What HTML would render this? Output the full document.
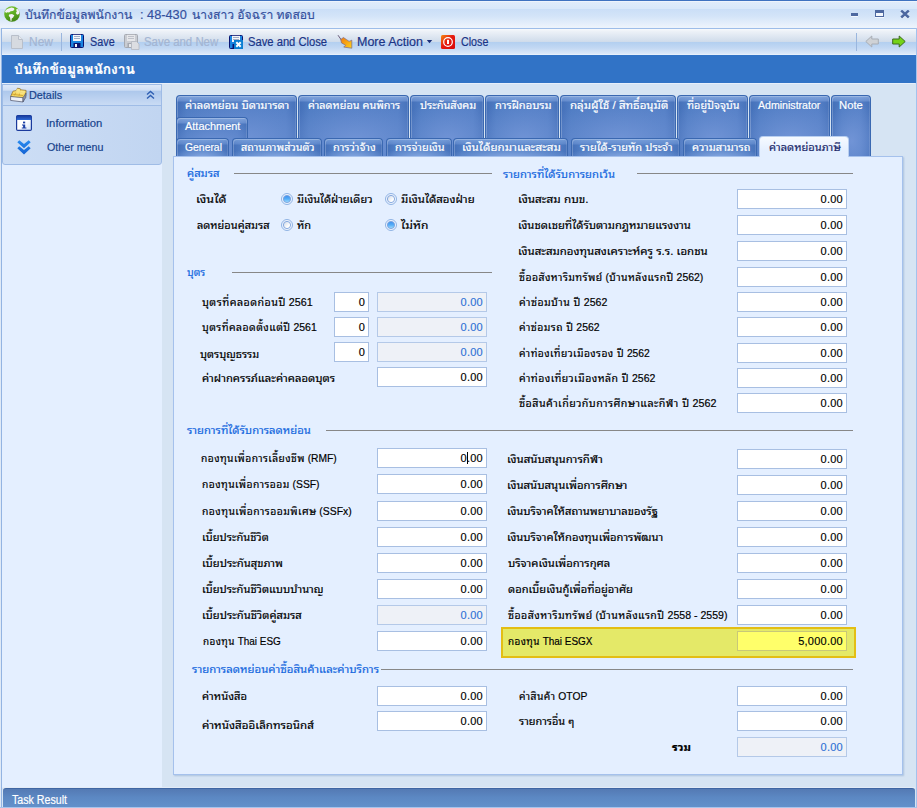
<!DOCTYPE html>
<html lang="th"><head><meta charset="utf-8"><title>บันทึกข้อมูลพนักงาน</title>
<style>
*{box-sizing:border-box;margin:0;padding:0}
html,body{width:917px;height:808px;overflow:hidden}
body{position:relative;background:#d6e4f3;font:11px 'Liberation Sans','Noto Sans Thai Looped','Loma','Noto Sans Thai UI','Noto Sans Thai',sans-serif;color:#000}
.a{position:absolute;white-space:nowrap}
.t{position:absolute;white-space:nowrap;line-height:14px;height:14px;transform-origin:0 50%;-webkit-text-stroke:0.18px currentColor}
.big{font-family:'Liberation Sans','Loma','Noto Sans Thai Looped','Noto Sans Thai UI','Noto Sans Thai',sans-serif}
.th{letter-spacing:.45px}
.tb{font-size:12px;color:#1a3486}
.dis{color:#a3b5d3}
.in{position:absolute;height:20px;background:#fff;border:1px solid #a8bfe2;text-align:right;font-size:11px;line-height:18px;padding-right:3px;white-space:nowrap;color:#000;letter-spacing:.25px;-webkit-text-stroke:0.15px currentColor}
.in.d{background:#eef1f7;color:#2f72d6;border-color:#b4c9e8}
.in.y{background:#ffff6a;border-color:#c8c878}
.sec{color:#1467de}
.ln{position:absolute;height:1px;background:#878787}
.tab{position:absolute;border:1px solid #3a68b1;border-bottom:none;border-radius:4px 4px 0 0;box-shadow:inset 1px 1px 0 rgba(255,255,255,.22),inset -1px 0 0 rgba(255,255,255,.12);background:linear-gradient(rgba(160,190,235,.6),rgba(135,168,225,.45) 5px,rgba(130,165,225,0) 6px),radial-gradient(ellipse 75% 70% at 52% 75%,#7194d6,rgba(113,148,214,0) 100%),linear-gradient(90deg,#4470b9,#4f7cc3 10px,#547fc6 calc(100% - 10px),#4873bb)}
.tab.r3{background:linear-gradient(rgba(150,185,235,.55),rgba(130,165,225,.35) 5px,rgba(130,165,225,0) 6px),radial-gradient(ellipse 60% 60% at 50% 110%,#86a8e0,rgba(134,168,224,0) 100%),linear-gradient(90deg,#4470b9,#4f7cc3 8px,#5682c8 50%,#4f7cc3 calc(100% - 8px),#4873bb)}
.tt{color:#fff}
.rad{position:absolute;width:12px;height:12px;border-radius:50%;border:1px solid #8db2e3;background:#eaf1fc}
.rad:before{content:"";position:absolute;left:1px;top:1px;width:8px;height:8px;border-radius:50%;border:1px solid #7fa6de;background:linear-gradient(135deg,#d4dce8,#ffffff 70%)}
.rad.on:before{background:linear-gradient(#2f86ea,#4aa6f6 55%,#8ad0fc)}
</style></head>
<body>
<div class="a" style="left:0;top:0;width:917px;height:28px;background:linear-gradient(#e2edfb 0,#d9e8fa 8.5px,#cbdff7 9.5px,#d3e4f8 16px,#ecf3fc 27px)"></div>
<div class="a" style="left:0;top:0;width:917px;height:1px;background:#3f72c0"></div>
<div class="a" style="left:0;top:1px;width:917px;height:1px;background:#eef4fc"></div>
<svg class="a" style="left:4px;top:6px" width="16" height="16" viewBox="0 0 16 16"><defs><linearGradient id="gl" x1="0" y1="0" x2="0.3" y2="1"><stop offset="0" stop-color="#7cc63a"/><stop offset="0.55" stop-color="#5fae22"/><stop offset="1" stop-color="#468a18"/></linearGradient></defs><circle cx="8" cy="8" r="7.8" fill="url(#gl)"/><path d="M0.9 5.6C1.8 3.6 3.8 2.3 6 2l1.6-.5 2.5.7.2 1.8-1.7.9-2 .4-1.5 1.1-2-.1-1 .8zM12 3.4l1.8-.5 1.6 2.6-.3 2.6-2 .6-1.3-1.7 1-1.5zM5 8.5l3-.5 2.3 1.2-1.2 2.3-1.4 1-.2 2.5-1-.2-.4-3.3-1.3-1.5z" fill="#f4f1f6"/></svg>
<div class="t big" style="left:24.6px;top:7.0px;transform:scaleX(0.9742);font-size:12.5px;color:#34509e;line-height:16px;height:16px">บันทึกข้อมูลพนักงาน</div>
<div class="t big" style="left:139.6px;top:7.0px;transform:scaleX(1.0196);font-size:12.5px;color:#34509e;line-height:16px;height:16px">: 48-430</div>
<div class="t big" style="left:192.3px;top:7.0px;transform:scaleX(0.9686);font-size:12.5px;color:#34509e;line-height:16px;height:16px">นางสาว อัจฉรา ทดสอบ</div>
<div class="a" style="left:851px;top:13px;width:7px;height:3px;background:#4d68a0;box-shadow:0 1px 0 #f2f7fd"></div>
<div class="a" style="left:875px;top:10px;width:9px;height:7px;border:1px solid #4d68a0;border-top-width:3px;background:#f4f8fd;box-shadow:0 1px 0 #f2f7fd"></div>
<svg class="a" style="left:900px;top:10px" width="10" height="9" viewBox="0 0 10 9"><path d="M1.2 1.5l7.6 7M8.8 1.5l-7.6 7" stroke="#f2f7fd" stroke-width="2.4"/><path d="M1.2 0.5l7.6 7M8.8 0.5l-7.6 7" stroke="#4d68a0" stroke-width="2.4"/></svg>
<div class="a" style="left:1px;top:28px;width:915px;height:27px;border:1px solid #9dbde9;border-bottom:none;border-right:none;background:linear-gradient(#f8fafc 0,#eef2f8 2px,#d0dceb 12.6px,#b3cff0 13.4px,#c2d8f3 19px,#dde9f9 25px,#f2f7fd 26px)"></div>
<svg class="a" style="left:10px;top:34px" width="14" height="16" viewBox="0 0 14 16"><path d="M1.5 1.5h7l4 4v9h-11z" fill="#d6dae0" stroke="#b8bfca"/><path d="M8.5 1.5v4h4" fill="#e6e9ee" stroke="#b8bfca"/></svg>
<div class="t tb dis" style="left:29.0px;top:35.0px;transform:scaleX(0.9954);">New</div>
<div class="a" style="left:61px;top:33px;width:1px;height:18px;background:#9ab6de"></div>
<svg class="a" style="left:70px;top:34px" width="16" height="16" viewBox="0 0 16 16"><rect x="0.5" y="0.5" width="13" height="13" rx="1" fill="#1b84e0" stroke="#0a1470"/><rect x="3" y="0.8" width="8" height="6.2" fill="#f4f5f8"/><path d="M4 2.5h6M4 4.5h6" stroke="#8a9ab8" stroke-width=".8"/><rect x="3.5" y="9" width="7" height="4.5" fill="#0a1470"/><rect x="5" y="10" width="2" height="3" fill="#f4f5f8"/></svg>
<div class="t tb" style="left:89.7px;top:35.0px;transform:scaleX(0.9014);">Save</div>
<svg class="a" style="left:124px;top:34px" width="16" height="16" viewBox="0 0 16 16"><rect x="0.5" y="0.5" width="13" height="13" rx="1" fill="#c9ccd2" stroke="#a4a8b0"/><rect x="3" y="0.8" width="8" height="6.2" fill="#e6e7ea"/><path d="M4 2.5h6M4 4.5h6" stroke="#b4b8c0" stroke-width=".8"/><rect x="3.5" y="9" width="7" height="4.5" fill="#a4a8b0"/><rect x="5" y="10" width="2" height="3" fill="#e6e7ea"/><path d="M7.5 7.5h5l2.5 2.5v5.5h-7.5z" fill="#dcdee2" stroke="#b4b8c0" stroke-width=".8"/></svg>
<div class="t tb dis" style="left:143.6px;top:35.0px;transform:scaleX(0.9507);">Save and New</div>
<svg class="a" style="left:229px;top:35px" width="16" height="16" viewBox="0 0 16 16"><rect x="0.5" y="0.5" width="13" height="13" rx="1" fill="#1b84e0" stroke="#0a1470"/><rect x="3" y="0.8" width="8" height="6.2" fill="#f4f5f8"/><path d="M4 2.5h6M4 4.5h6" stroke="#8a9ab8" stroke-width=".8"/><rect x="3.5" y="9" width="7" height="4.5" fill="#0a1470"/><rect x="5" y="10" width="2" height="3" fill="#f4f5f8"/><rect x="5" y="5" width="9" height="9" fill="#0b7fd2"/><path d="M7.3 7.3l4.4 4.4M11.7 7.3l-4.4 4.4" stroke="#fff" stroke-width="2"/></svg>
<div class="t tb" style="left:247.8px;top:35.0px;transform:scaleX(0.9336);">Save and Close</div>
<svg class="a" style="left:337px;top:34px" width="16" height="16" viewBox="0 0 16 16"><defs><linearGradient id="og" x1="0" y1="0" x2="1" y2="1"><stop offset="0" stop-color="#f07a10"/><stop offset="1" stop-color="#ffd21a"/></linearGradient></defs><path d="M1 1.2l3.5 5" stroke="#6a5a7a" stroke-width="1"/><path d="M3.7 5.5l2.7-2 3 2 2.7 1.9 2.7-1.2v8l-8.1-1.1 1.9-1.9-4.1-2.3z" fill="url(#og)" stroke="#7a6a8a" stroke-width=".7"/></svg>
<div class="t tb" style="left:356.7px;top:35.0px;transform:scaleX(1.0392);">More Action</div>
<svg class="a" style="left:426px;top:39px" width="7" height="5" viewBox="0 0 7 5"><path d="M0.8 1h5.4l-2.7 3.2z" fill="#1b2f7a"/></svg>
<svg class="a" style="left:441px;top:35px" width="14" height="14" viewBox="0 0 14 14"><defs><linearGradient id="rg" x1="0" y1="0" x2="1" y2="1"><stop offset="0" stop-color="#f58a10"/><stop offset=".45" stop-color="#e61b10"/><stop offset="1" stop-color="#d80808"/></linearGradient></defs><rect x="0" y="0" width="14" height="14" rx="1.5" fill="url(#rg)"/><circle cx="7" cy="7" r="4.3" fill="none" stroke="#fff" stroke-width="1.2"/><rect x="6" y="4.8" width="2" height="4.2" fill="#fff"/></svg>
<div class="t tb" style="left:461.3px;top:35.0px;transform:scaleX(0.8913);">Close</div>
<div class="a" style="left:856px;top:33px;width:1px;height:18px;background:#9ab6de"></div>
<svg class="a" style="left:865px;top:35px" width="14" height="13" viewBox="0 0 14 13"><path d="M0.8 6.5l6-5.5v3h6.5v5h-6.5v3z" fill="#cfd2d6" stroke="#a8adb5"/></svg>
<svg class="a" style="left:892px;top:35px" width="14" height="13" viewBox="0 0 14 13"><path d="M13.2 6.5l-6-5.5v3h-6.5v5h6.5v3z" fill="#74d318" stroke="#3c6a20"/></svg>
<div class="a" style="left:2px;top:55px;width:914px;height:28px;background:#3173c6"></div>
<div class="t big" style="left:14.3px;top:59.5px;transform:scaleX(0.9784);font-size:14px;font-weight:bold;color:#fff;line-height:18px;height:18px">บันทึกข้อมูลพนักงาน</div>
<div class="a" style="left:0;top:28px;width:1px;height:780px;background:#dfe9f6"></div>
<div class="a" style="left:1px;top:28px;width:1px;height:780px;background:#93b4e2"></div>
<div class="a" style="left:916px;top:28px;width:1px;height:780px;background:#a3c2ec"></div>
<div class="a" style="left:2px;top:83px;width:913px;height:1px;background:#e6effb"></div>
<div class="a" style="left:2px;top:84px;width:160px;height:703px;background:#e4efff"></div>
<div class="a" style="left:2px;top:84px;width:160px;height:81px;background:linear-gradient(90deg,#cddef5,#c1d5f1);border:1px solid #9fbce6;border-radius:0 0 3px 3px"></div>
<div class="a" style="left:2px;top:84px;width:160px;height:22px;background:linear-gradient(#dee9f9 0,#d0dff5 5px,#aec8ec 6.5px,#c9dbf4 20px);border:1px solid #9fbce6"></div>
<svg class="a" style="left:10px;top:87px" width="17" height="16" viewBox="0 0 17 16"><path d="M0.6 9.5l2.4-5.3 3.3-.6 1.2-2.4 2.8.6.4 1 5.4.6-.3 5.2-2.6 4z" fill="#f6d75e" stroke="#8a6a28" stroke-width=".7"/><path d="M3.4 4.6l10 1.2M6.4 4l-1.8 4.3M10.6 3l-1.6 5.6M2 7.2l11 1.4" stroke="#c79a2a" stroke-width=".7" fill="none"/><path d="M2.6 5l3.2-.8 1.2-2.4 2.6.5.3 1.2 5.6.6-2.3 3.4z" fill="#fbe88c" opacity=".8"/><path d="M0.6 9.5l12.4 1.2v4.3l-12.4-1.6z" fill="#eef1f7" stroke="#4a5068" stroke-width=".7"/><path d="M13 10.7l2.9-4.6v4.2l-2.9 4.7z" fill="#8e94a8" stroke="#4a5068" stroke-width=".6"/></svg>
<div class="t " style="left:28.7px;top:88.0px;transform:scaleX(0.9845);color:#15428b">Details</div>
<svg class="a" style="left:146px;top:90px" width="9" height="10" viewBox="0 0 9 10"><path d="M1 4.5l3.5-3 3.5 3M1 8.5l3.5-3 3.5 3" fill="none" stroke="#2f5fb3" stroke-width="1.4"/></svg>
<svg class="a" style="left:16px;top:115px" width="16" height="16" viewBox="0 0 16 16"><defs><linearGradient id="ih" x1="0" y1="0" x2="0" y2="1"><stop offset="0" stop-color="#173a9c"/><stop offset="1" stop-color="#2f6ad6"/></linearGradient><linearGradient id="ib" x1="0" y1="0" x2="1" y2="1"><stop offset="0.5" stop-color="#ffffff"/><stop offset="1" stop-color="#cfe0f8"/></linearGradient></defs><rect x="0.6" y="0.6" width="14.8" height="14.8" rx="1.2" fill="url(#ib)" stroke="#1b3a9c" stroke-width="1.2"/><path d="M0.6 1.6q0-1 1-1h12.8q1 0 1 1v3.4h-14.8z" fill="url(#ih)"/><rect x="7" y="6.6" width="2.2" height="1.8" fill="#1b3fa6"/><path d="M6 9.4h3.2v3.2h1.2v1h-4.6v-1h1.3v-2.2h-1.1z" fill="#1b3fa6"/></svg>
<div class="t " style="left:46.0px;top:116.0px;transform:scaleX(1.0222);color:#15428b">Information</div>
<svg class="a" style="left:17px;top:140px" width="14" height="15" viewBox="0 0 14 15"><defs><linearGradient id="cv" x1="0" y1="0" x2="0" y2="1"><stop offset="0" stop-color="#2a8cf0"/><stop offset="1" stop-color="#1462d2"/></linearGradient></defs><path d="M0.3 2.2l2-1.9 4.7 3.6 4.7-3.6 2 1.9-6.7 6zM0.3 8.2l2-1.9 4.7 3.6 4.7-3.6 2 1.9-6.7 6.4z" fill="url(#cv)"/></svg>
<div class="t " style="left:46.8px;top:140.0px;transform:scaleX(0.9716);color:#15428b">Other menu</div>
<div class="a" style="left:2px;top:787px;width:913px;height:1px;background:#e2ebf7"></div>
<div class="a" style="left:3px;top:788px;width:912px;height:20px;background:linear-gradient(#547ab4,#5c88c3 45%,#6391cb);border-top:1px solid #3f66a3;border-radius:3px 3px 0 0"></div>
<div class="a" style="left:0;top:807px;width:917px;height:1px;background:#a6c4ec"></div>
<div class="t " style="left:11.9px;top:793.3px;transform:scaleX(0.8874);font-size:12px;color:#fff">Task Result</div>
<div class="tab" style="left:176.0px;top:95.0px;width:121.0px;height:61.0px"></div>
<div class="t tt" style="left:185.1px;top:98.3px;transform:scaleX(1.0226);">ค่าลดหย่อน บิดามารดา</div>
<div class="tab" style="left:298.0px;top:95.0px;width:111.0px;height:61.0px"></div>
<div class="t tt" style="left:308.0px;top:98.3px;transform:scaleX(0.9880);">ค่าลดหย่อน คนพิการ</div>
<div class="tab" style="left:410.0px;top:95.0px;width:74.0px;height:61.0px"></div>
<div class="t tt" style="left:419.5px;top:98.3px;transform:scaleX(0.9984);">ประกันสังคม</div>
<div class="tab" style="left:485.0px;top:95.0px;width:74.0px;height:61.0px"></div>
<div class="t tt" style="left:494.9px;top:98.3px;transform:scaleX(1.0115);">การฝึกอบรม</div>
<div class="tab" style="left:560.0px;top:95.0px;width:116.0px;height:61.0px"></div>
<div class="t tt" style="left:569.6px;top:98.3px;transform:scaleX(1.0503);">กลุ่มผู้ใช้ / สิทธิ์อนุมัติ</div>
<div class="tab" style="left:677.0px;top:95.0px;width:71.0px;height:61.0px"></div>
<div class="t tt" style="left:687.1px;top:98.3px;transform:scaleX(0.9851);">ที่อยู่ปัจจุบัน</div>
<div class="tab" style="left:749.0px;top:95.0px;width:81.0px;height:61.0px"></div>
<div class="t tt" style="left:758.2px;top:98.3px;transform:scaleX(0.9624);">Administrator</div>
<div class="tab" style="left:831.0px;top:95.0px;width:40.0px;height:61.0px"></div>
<div class="t tt" style="left:838.7px;top:98.3px;transform:scaleX(1.0248);">Note</div>
<div class="tab" style="left:176.0px;top:117.0px;width:72.0px;height:39.0px"></div>
<div class="t tt" style="left:185.2px;top:118.8px;transform:scaleX(0.9955);">Attachment</div>
<div class="tab r3" style="left:176.0px;top:138.0px;width:53.0px;height:18.0px"></div>
<div class="t tt" style="left:184.7px;top:140.2px;transform:scaleX(0.9439);">General</div>
<div class="tab r3" style="left:231.5px;top:138.0px;width:90.5px;height:18.0px"></div>
<div class="t tt" style="left:240.9px;top:140.2px;transform:scaleX(0.9921);">สถานภาพส่วนตัว</div>
<div class="tab r3" style="left:324.0px;top:138.0px;width:59.0px;height:18.0px"></div>
<div class="t tt" style="left:333.0px;top:140.2px;transform:scaleX(1.0063);">การว่าจ้าง</div>
<div class="tab r3" style="left:385.5px;top:138.0px;width:66.0px;height:18.0px"></div>
<div class="t tt" style="left:394.5px;top:140.2px;transform:scaleX(1.0011);">การจ่ายเงิน</div>
<div class="tab r3" style="left:453.0px;top:138.0px;width:115.0px;height:18.0px"></div>
<div class="t tt" style="left:462.0px;top:140.2px;transform:scaleX(1.0551);">เงินได้ยกมาและสะสม</div>
<div class="tab r3" style="left:570.5px;top:138.0px;width:109.5px;height:18.0px"></div>
<div class="t tt" style="left:579.8px;top:140.2px;transform:scaleX(1.0066);">รายได้-รายหัก ประจำ</div>
<div class="tab r3" style="left:683.0px;top:138.0px;width:74.0px;height:18.0px"></div>
<div class="t tt" style="left:691.5px;top:140.2px;transform:scaleX(1.0067);">ความสามารถ</div>
<div class="a" style="left:173px;top:156px;width:730px;height:619px;background:#e4efff;border:1px solid #a5c1ec;box-shadow:1px 1px 1.5px rgba(110,145,195,.4)"></div>
<div class="a" style="left:759px;top:136px;width:90px;height:21px;background:linear-gradient(#f6faff,#e4efff 70%);border:1px solid #b9cff0;border-bottom:none;border-radius:4px 4px 0 0"></div>
<div class="t " style="left:768.6px;top:139.5px;transform:scaleX(1.0121);color:#1b2a6b">ค่าลดหย่อนภาษี</div>
<svg class="a" width="0" height="0"><defs><linearGradient id="ron" x1="0" y1="0" x2="0" y2="1"><stop offset="0" stop-color="#3a8eee"/><stop offset=".5" stop-color="#55aef8"/><stop offset="1" stop-color="#a6e0fe"/></linearGradient><linearGradient id="roff" x1="0" y1="0" x2="1" y2="1"><stop offset="0" stop-color="#cdd6e4"/><stop offset=".7" stop-color="#ffffff"/></linearGradient></defs></svg>
<div class="t sec" style="left:187.0px;top:166.0px;transform:scaleX(1.0229);">คู่สมรส</div>
<div class="ln" style="left:234.0px;top:173px;width:258.0px"></div>
<div class="t sec" style="left:503.1px;top:167.0px;transform:scaleX(1.0266);">รายการที่ได้รับการยกเว้น</div>
<div class="ln" style="left:637.2px;top:173px;width:216.1px"></div>
<div class="t " style="left:196.1px;top:192.0px;transform:scaleX(1.1363);">เงินได้</div>
<svg class="a" style="left:281px;top:193px" width="12" height="12" viewBox="0 0 12 12"><circle cx="6" cy="6" r="5.5" fill="#edf3fd" stroke="#8fb3e4"/><circle cx="6" cy="6" r="3.6" fill="url(#ron)" stroke="#7aa2dc" stroke-width=".9"/></svg>
<div class="t " style="left:296.8px;top:192.0px;transform:scaleX(1.0045);">มีเงินได้ฝ่ายเดียว</div>
<svg class="a" style="left:385px;top:193px" width="12" height="12" viewBox="0 0 12 12"><circle cx="6" cy="6" r="5.5" fill="#edf3fd" stroke="#8fb3e4"/><circle cx="6" cy="6" r="3.6" fill="url(#roff)" stroke="#7aa2dc" stroke-width=".9"/></svg>
<div class="t " style="left:400.6px;top:192.0px;transform:scaleX(1.0403);">มีเงินได้สองฝ่าย</div>
<div class="t " style="left:197.1px;top:218.0px;transform:scaleX(1.0001);">ลดหย่อนคู่สมรส</div>
<svg class="a" style="left:281px;top:219px" width="12" height="12" viewBox="0 0 12 12"><circle cx="6" cy="6" r="5.5" fill="#edf3fd" stroke="#8fb3e4"/><circle cx="6" cy="6" r="3.6" fill="url(#roff)" stroke="#7aa2dc" stroke-width=".9"/></svg>
<div class="t " style="left:296.9px;top:218.0px;transform:scaleX(1.0070);">หัก</div>
<svg class="a" style="left:385px;top:219px" width="12" height="12" viewBox="0 0 12 12"><circle cx="6" cy="6" r="5.5" fill="#edf3fd" stroke="#8fb3e4"/><circle cx="6" cy="6" r="3.6" fill="url(#ron)" stroke="#7aa2dc" stroke-width=".9"/></svg>
<div class="t " style="left:400.8px;top:218.0px;transform:scaleX(1.0968);">ไม่หัก</div>
<div class="t " style="left:518.0px;top:192.4px;transform:scaleX(1.0667);">เงินสะสม กบข.</div>
<div class="in " style="left:737px;top:189px;width:110px">0.00</div>
<div class="t " style="left:518.0px;top:218.4px;transform:scaleX(1.0254);">เงินชดเชยที่ได้รับตามกฎหมายแรงงาน</div>
<div class="in " style="left:737px;top:215px;width:110px">0.00</div>
<div class="t " style="left:518.0px;top:244.4px;transform:scaleX(1.0427);">เงินสะสมกองทุนสงเคราะห์ครู ร.ร. เอกชน</div>
<div class="in " style="left:737px;top:241px;width:110px">0.00</div>
<div class="t " style="left:519.0px;top:270.4px;transform:scaleX(0.9499);"><span class="th">ซื้ออสังหาริมทรัพย์</span> (<span class="th">บ้านหลังแรกปี</span> 2562)</div>
<div class="in " style="left:737px;top:267px;width:110px">0.00</div>
<div class="t " style="left:518.9px;top:295.4px;transform:scaleX(0.9596);"><span class="th">ค่าซ่อมบ้าน ปี</span> 2562</div>
<div class="in " style="left:737px;top:292px;width:110px">0.00</div>
<div class="t " style="left:518.9px;top:320.4px;transform:scaleX(0.9502);"><span class="th">ค่าซ่อมรถ ปี</span> 2562</div>
<div class="in " style="left:737px;top:317px;width:110px">0.00</div>
<div class="t " style="left:518.9px;top:346.4px;transform:scaleX(0.9380);"><span class="th">ค่าท่องเที่ยวเมืองรอง ปี</span> 2562</div>
<div class="in " style="left:737px;top:343px;width:110px">0.00</div>
<div class="t " style="left:518.9px;top:371.4px;transform:scaleX(0.9567);"><span class="th">ค่าท่องเที่ยวเมืองหลัก ปี</span> 2562</div>
<div class="in " style="left:737px;top:368px;width:110px">0.00</div>
<div class="t " style="left:518.9px;top:396.4px;transform:scaleX(0.9742);"><span class="th">ซื้อสินค้าเกี่ยวกับการศึกษาและกีฬา ปี</span> 2562</div>
<div class="in " style="left:737px;top:393px;width:110px">0.00</div>
<div class="t sec" style="left:187.1px;top:265.0px;transform:scaleX(0.9450);">บุตร</div>
<div class="ln" style="left:231.6px;top:272px;width:260.4px"></div>
<div class="t " style="left:201.7px;top:295.0px;transform:scaleX(0.9759);"><span class="th">บุตรที่คลอดก่อนปี</span> 2561</div>
<div class="in " style="left:334px;top:292px;width:35px">0</div>
<div class="in d" style="left:377px;top:292px;width:110px">0.00</div>
<div class="t " style="left:201.7px;top:320.0px;transform:scaleX(0.9530);"><span class="th">บุตรที่คลอดตั้งแต่ปี</span> 2561</div>
<div class="in " style="left:334px;top:317px;width:35px">0</div>
<div class="in d" style="left:377px;top:317px;width:110px">0.00</div>
<div class="t " style="left:200.0px;top:346.5px;transform:scaleX(0.9918);">บุตรบุญธรรม</div>
<div class="in " style="left:334px;top:342px;width:35px">0</div>
<div class="in d" style="left:377px;top:342px;width:110px">0.00</div>
<div class="t " style="left:201.6px;top:371.0px;transform:scaleX(1.0283);">ค่าฝากครรภ์และค่าคลอดบุตร</div>
<div class="in " style="left:377px;top:367px;width:110px">0.00</div>
<div class="t sec" style="left:187.2px;top:423.0px;transform:scaleX(1.0272);">รายการที่ได้รับการลดหย่อน</div>
<div class="ln" style="left:326.0px;top:430px;width:527.3px"></div>
<div class="a" style="left:501px;top:627px;width:355px;height:31px;background:#e4e968;border:2px solid #e3be14"></div>
<div class="t " style="left:201.4px;top:451.0px;transform:scaleX(0.9350);"><span class="th">กองทุนเพื่อการเลี้ยงชีพ</span> (RMF)</div>
<div class="in " style="left:377px;top:448px;width:110px">0.00</div>
<div class="t " style="left:507.3px;top:452.0px;transform:scaleX(1.0419);">เงินสนับสนุนการกีฬา</div>
<div class="in " style="left:737px;top:449px;width:110px">0.00</div>
<div class="t " style="left:202.4px;top:477.0px;transform:scaleX(0.9405);"><span class="th">กองทุนเพื่อการออม</span> (SSF)</div>
<div class="in " style="left:377px;top:474px;width:110px">0.00</div>
<div class="t " style="left:507.3px;top:478.0px;transform:scaleX(1.0356);">เงินสนับสนุนเพื่อการศึกษา</div>
<div class="in " style="left:737px;top:475px;width:110px">0.00</div>
<div class="t " style="left:202.4px;top:504.0px;transform:scaleX(0.9467);"><span class="th">กองทุนเพื่อการออมพิเศษ</span> (SSFx)</div>
<div class="in " style="left:377px;top:501px;width:110px">0.00</div>
<div class="t " style="left:507.3px;top:504.0px;transform:scaleX(1.0198);">เงินบริจาคให้สถานพยาบาลของรัฐ</div>
<div class="in " style="left:737px;top:501px;width:110px">0.00</div>
<div class="t " style="left:201.9px;top:530.0px;transform:scaleX(1.0097);">เบี้ยประกันชีวิต</div>
<div class="in " style="left:377px;top:527px;width:110px">0.00</div>
<div class="t " style="left:507.3px;top:530.0px;transform:scaleX(1.0203);">เงินบริจาคให้กองทุนเพื่อการพัฒนา</div>
<div class="in " style="left:737px;top:527px;width:110px">0.00</div>
<div class="t " style="left:201.8px;top:556.0px;transform:scaleX(1.0213);">เบี้ยประกันสุขภาพ</div>
<div class="in " style="left:377px;top:553px;width:110px">0.00</div>
<div class="t " style="left:508.2px;top:556.0px;transform:scaleX(1.0232);">บริจาคเงินเพื่อการกุศล</div>
<div class="in " style="left:737px;top:553px;width:110px">0.00</div>
<div class="t " style="left:201.8px;top:582.0px;transform:scaleX(1.0141);">เบี้ยประกันชีวิตแบบบำนาญ</div>
<div class="in " style="left:377px;top:579px;width:110px">0.00</div>
<div class="t " style="left:508.2px;top:582.0px;transform:scaleX(1.0157);">ดอกเบี้ยเงินกู้เพื่อที่อยู่อาศัย</div>
<div class="in " style="left:737px;top:579px;width:110px">0.00</div>
<div class="t " style="left:201.8px;top:608.0px;transform:scaleX(1.0188);">เบี้ยประกันชีวิตคู่สมรส</div>
<div class="in d" style="left:377px;top:605px;width:110px">0.00</div>
<div class="t " style="left:508.2px;top:608.0px;transform:scaleX(0.9614);"><span class="th">ซื้ออสังหาริมทรัพย์</span> (<span class="th">บ้านหลังแรกปี</span> 2558 - 2559)</div>
<div class="in " style="left:737px;top:605px;width:110px">0.00</div>
<div class="t " style="left:202.7px;top:634.0px;transform:scaleX(0.9050);"><span class="th">กองทุน</span> Thai ESG</div>
<div class="in " style="left:377px;top:631px;width:110px">0.00</div>
<div class="t " style="left:508.2px;top:634.0px;transform:scaleX(0.9049);"><span class="th">กองทุน</span> Thai ESGX</div>
<div class="in y" style="left:737px;top:631px;width:110px">5,000.00</div>
<div class="a" style="left:467px;top:452px;width:1px;height:12px;background:#000"></div>
<div class="t sec" style="left:192.4px;top:662.0px;transform:scaleX(1.0364);">รายการลดหย่อนค่าซื้อสินค้าและค่าบริการ</div>
<div class="ln" style="left:380.6px;top:669px;width:472.7px"></div>
<div class="t " style="left:201.6px;top:688.7px;transform:scaleX(1.0204);">ค่าหนังสือ</div>
<div class="in " style="left:377px;top:686px;width:110px">0.00</div>
<div class="t " style="left:201.6px;top:718.0px;transform:scaleX(1.0543);">ค่าหนังสืออิเล็กทรอนิกส์</div>
<div class="in " style="left:377px;top:711px;width:110px">0.00</div>
<div class="t " style="left:519.2px;top:688.7px;transform:scaleX(0.9362);"><span class="th">ค่าสินค้า</span> OTOP</div>
<div class="in " style="left:737px;top:686px;width:110px">0.00</div>
<div class="t " style="left:519.3px;top:713.7px;transform:scaleX(0.9970);">รายการอื่น ๆ</div>
<div class="in " style="left:737px;top:711px;width:110px">0.00</div>
<div class="t " style="left:671.7px;top:739.7px;transform:scaleX(1.0351);font-weight:bold">รวม</div>
<div class="in d" style="left:737px;top:737px;width:110px">0.00</div>
</body></html>
